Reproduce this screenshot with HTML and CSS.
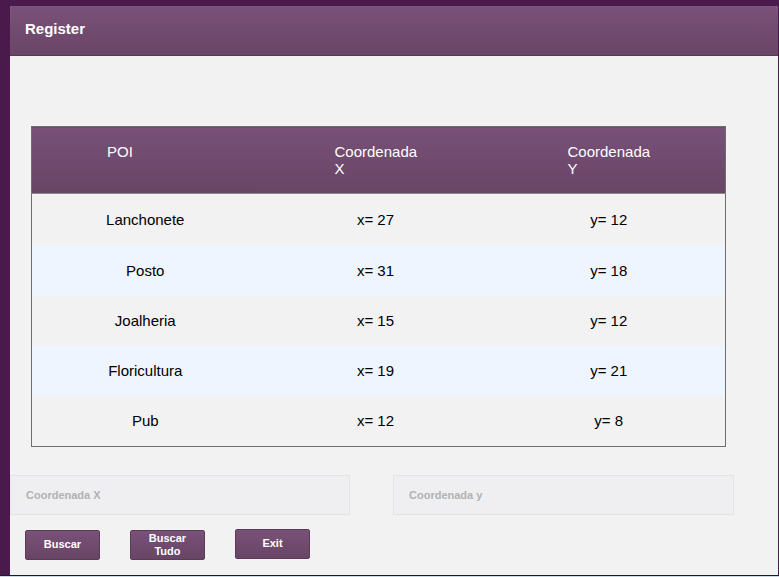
FILE: index.html
```html
<!DOCTYPE html>
<html>
<head>
<meta charset="utf-8">
<link rel="stylesheet" href="styles.css">
</head>
<body>
<div class="window">
  <div class="titlebar">Register</div>
  <div class="content">
    <table class="grid">
      <colgroup>
        <col class="c1">
        <col class="c2">
        <col class="c3">
      </colgroup>
      <thead>
        <tr>
          <th>POI</th>
          <th class="h2">Coordenada<br>X</th>
          <th>Coordenada<br>Y</th>
        </tr>
      </thead>
      <tbody>
        <tr class="tall"><td>Lanchonete</td><td>x= 27</td><td>y= 12</td></tr>
        <tr class="alt tall"><td>Posto</td><td>x= 31</td><td>y= 18</td></tr>
        <tr><td>Joalheria</td><td>x= 15</td><td>y= 12</td></tr>
        <tr class="alt"><td>Floricultura</td><td>x= 19</td><td>y= 21</td></tr>
        <tr><td>Pub</td><td>x= 12</td><td>y= 8</td></tr>
      </tbody>
    </table>
    <div class="fields">
      <input class="field field-x" type="text" placeholder="Coordenada X">
      <input class="field field-y" type="text" placeholder="Coordenada y">
    </div>
    <div class="buttons">
      <button class="btn">Buscar</button>
      <button class="btn two">Buscar<br>Tudo</button>
      <button class="btn exit">Exit</button>
    </div>
  </div>
</div>
<div class="taskbar"></div>
</body>
</html>
```
FILE: styles.css
```css
html, body {
  margin: 0;
  padding: 0;
  height: 577px;
  overflow: hidden;
}
body {
  background: #4b1a4d;
  font-family: "Liberation Sans", Arial, sans-serif;
  padding-top: 6px;
  box-sizing: border-box;
}
.window {
  margin-left: 10px;
  width: 768px;
  height: 569px;
  background: #f2f2f2;
  border-radius: 3px 3px 0 0;
  display: flex;
  flex-direction: column;
  overflow: hidden;
}
.titlebar {
  height: 50px;
  border-bottom: 1px solid #5a3759;
  background: linear-gradient(#7a5179, #694566);
  color: #fff;
  font-weight: bold;
  font-size: 15px;
  line-height: 46px;
  padding-left: 15px;
  box-sizing: border-box;
}
.content {
  flex: 1;
  display: flex;
  flex-direction: column;
}
.grid {
  margin: 70px 0 0 21px;
  width: 694px;
  border-collapse: collapse;
  border: 1px solid #6e6e6e;
  table-layout: fixed;
  font-size: 15px;
}
.c1 { width: 227px; }
.c2 { width: 234px; }
.c3 { width: 233px; }
.grid th {
  height: 67px;
  box-sizing: border-box;
  background: linear-gradient(#785078, #684565);
  color: #fff;
  font-weight: normal;
  text-align: left;
  vertical-align: top;
  padding: 16px 0 0 75px;
  line-height: 17px;
  border-bottom: 1px solid #8a8a8a;
}
.grid th.h2 {
  padding-left: 76px;
}
.grid td {
  height: 50px;
  padding: 0;
  text-align: center;
  color: #000;
  background: #f2f2f2;
}
.grid tr.tall td {
  height: 51px;
  padding-top: 1px;
  box-sizing: border-box;
}
.grid tr.alt td {
  background: #eef5fe;
}
.fields {
  display: flex;
  gap: 43px;
  margin-top: 28px;
}
.field {
  height: 40px;
  box-sizing: border-box;
  background: #efeef0;
  border: 1px solid #e3e3e3;
  padding: 0 0 0 15px;
  font-family: "Liberation Sans", Arial, sans-serif;
  font-size: 11px;
  font-weight: bold;
  outline: none;
  margin: 0;
}
.field-x { width: 340px; }
.field-y { width: 341px; }
.field::placeholder {
  color: #b2b2b2;
}
.buttons {
  display: flex;
  gap: 30px;
  margin: 15px 0 0 15px;
  align-items: flex-start;
}
.btn {
  width: 75px;
  height: 30px;
  box-sizing: border-box;
  margin: 0;
  padding: 0;
  border: 1px solid #5b3a5a;
  border-radius: 2px;
  background: linear-gradient(#7a5179, #684565);
  color: #fff;
  font-family: "Liberation Sans", Arial, sans-serif;
  font-size: 11px;
  font-weight: bold;
  line-height: 13px;
}
.btn.exit {
  margin-top: -1px;
}
.taskbar {
  height: 2px;
  border-top: 1px solid #1a1a2a;
  background: #c9d9e6;
}
```
